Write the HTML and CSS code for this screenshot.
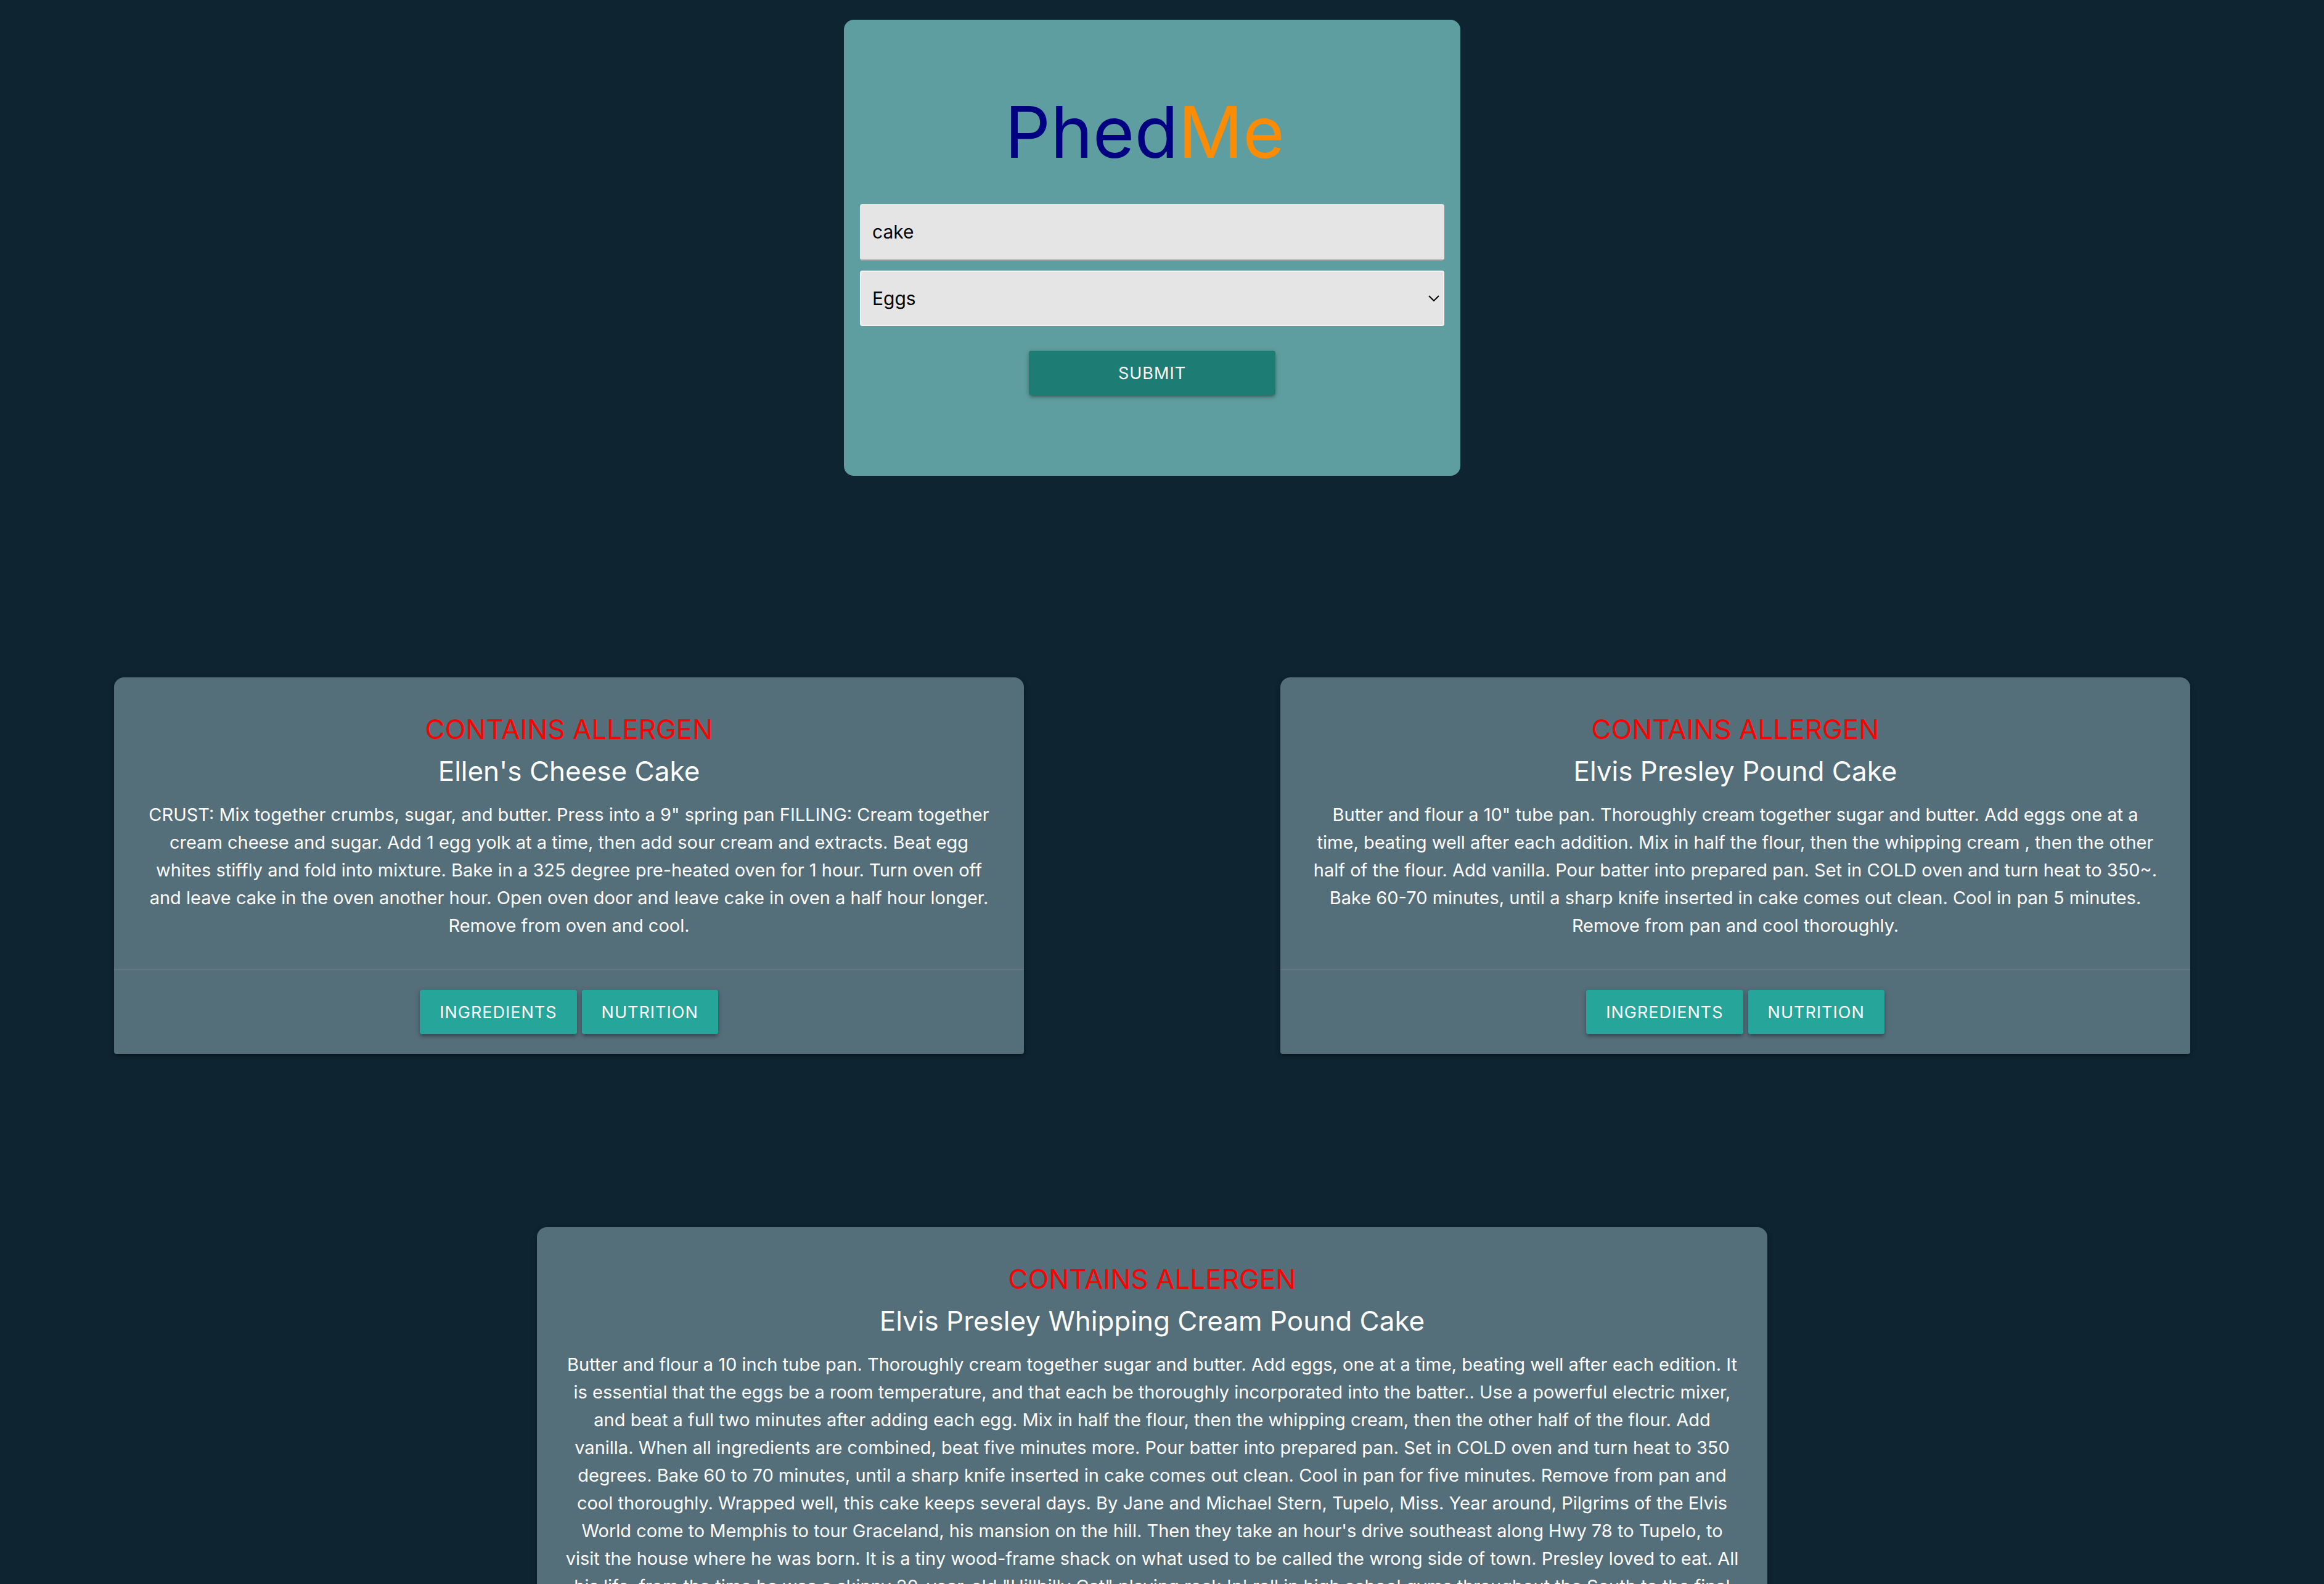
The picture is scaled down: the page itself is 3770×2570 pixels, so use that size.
FILE: index.html
```html
<!DOCTYPE html>
<html lang="en">
<head>
  <meta charset="utf-8">
  <title>PhedMe</title>
  <link rel="stylesheet" href="styles.css">
</head>
<body>
  <main class="page">
    <form class="search">
      <h1 class="logo"><span class="logo-phed">Phed</span><span class="logo-me">Me</span></h1>
      <input class="field" type="text" value="cake" aria-label="Recipe">
      <div class="select">
        <select class="field field-select" aria-label="Allergen">
          <option selected>Eggs</option>
        </select>
        <svg class="chevron" viewBox="0 0 18 10" width="18" height="10" aria-hidden="true"><path d="M1 1l8 8 8-8" fill="none" stroke="#000" stroke-width="2"/></svg>
      </div>
      <button class="btn btn-submit" type="button">Submit</button>
    </form>

    <section class="row">
      <article class="card">
        <div class="card-content">
          <h2 class="card-title allergen">CONTAINS ALLERGEN</h2>
          <h2 class="card-title">Ellen's Cheese Cake</h2>
          <p class="card-text">CRUST: Mix together crumbs, sugar, and butter. Press into a 9" spring pan FILLING: Cream together cream cheese and sugar. Add 1 egg yolk at a time, then add sour cream and extracts. Beat egg whites stiffly and fold into mixture. Bake in a 325 degree pre-heated oven for 1 hour. Turn oven off and leave cake in the oven another hour. Open oven door and leave cake in oven a half hour longer. Remove from oven and cool.</p>
        </div>
        <div class="card-action">
          <button class="btn" type="button">Ingredients</button>
          <button class="btn" type="button">Nutrition</button>
        </div>
      </article>
      <article class="card">
        <div class="card-content">
          <h2 class="card-title allergen">CONTAINS ALLERGEN</h2>
          <h2 class="card-title">Elvis Presley Pound Cake</h2>
          <p class="card-text">Butter and flour a 10" tube pan. Thoroughly cream together sugar and butter. Add eggs one at a time, beating well after each addition. Mix in half the flour, then the whipping cream , then the other half of the flour. Add vanilla. Pour batter into prepared pan. Set in COLD oven and turn heat to 350~. Bake 60-70 minutes, until a sharp knife inserted in cake comes out clean. Cool in pan 5 minutes. Remove from pan and cool thoroughly.</p>
        </div>
        <div class="card-action">
          <button class="btn" type="button">Ingredients</button>
          <button class="btn" type="button">Nutrition</button>
        </div>
      </article>
    </section>

    <section class="row row-single">
      <article class="card card-wide">
        <div class="card-content">
          <h2 class="card-title allergen">CONTAINS ALLERGEN</h2>
          <h2 class="card-title">Elvis Presley Whipping Cream Pound Cake</h2>
          <p class="card-text">Butter and flour a 10 inch tube pan. Thoroughly cream together sugar and butter. Add eggs, one at a time, beating well after each edition. It is essential that the eggs be a room temperature, and that each be thoroughly incorporated into the batter.. Use a powerful electric mixer, and beat a full two minutes after adding each egg. Mix in half the flour, then the whipping cream, then the other half of the flour. Add vanilla. When all ingredients are combined, beat five minutes more. Pour batter into prepared pan. Set in COLD oven and turn heat to 350 degrees. Bake 60 to 70 minutes, until a sharp knife inserted in cake comes out clean. Cool in pan for five minutes. Remove from pan and cool thoroughly. Wrapped well, this cake keeps several days. By Jane and Michael Stern, Tupelo, Miss. Year around, Pilgrims of the Elvis World come to Memphis to tour Graceland, his mansion on the hill. Then they take an hour's drive southeast along Hwy 78 to Tupelo, to visit the house where he was born. It is a tiny wood-frame shack on what used to be called the wrong side of town. Presley loved to eat. All his life, from the time he was a skinny 20-year-old "Hillbilly Cat" playing rock 'n' roll in high school gyms throughout the South to the final</p>
        </div>
      </article>
    </section>
  </main>
</body>
</html>
```

FILE: styles.css
```css
* {
  box-sizing: border-box;
}

body {
  margin: 0;
  background: #0e2431;
  color: #fff;
  font-family: Inter, "Liberation Sans", sans-serif;
  font-size: 29px;
  line-height: 45px;
}

.page {
  height: 100vh;
  overflow-y: auto;
  scrollbar-width: none;
  padding: 32px 32px 0 0;
}

/* Search form */
.search {
  display: flex;
  flex-direction: column;
  align-items: stretch;
  max-width: 1000px;
  margin: 0 auto;
  padding: 112px 26px 131px;
  border-radius: 16px;
  background: #5f9ea0;
}

.logo {
  margin: 0 0 47px;
  padding-right: 24px;
  font-size: 116px;
  font-weight: 400;
  line-height: 140px;
  text-align: center;
}

.logo-phed {
  color: #000080;
}

.logo-me {
  color: #ff8c00;
}

.field {
  width: 100%;
  height: 92px;
  margin: 0;
  padding: 0 20px;
  border: 0;
  border-bottom: 2px solid #9e9e9e;
  border-radius: 4px;
  background: #e5e5e5;
  color: #000;
  font-family: inherit;
  font-size: 30px;
}

.select {
  display: grid;
  align-items: center;
  margin: 16px 0 40px;
}

.field-select {
  grid-area: 1 / 1;
  height: 90px;
  padding: 0 18px;
  border: 2px solid #f2f2f2;
  appearance: none;
}

.chevron {
  grid-area: 1 / 1;
  justify-self: end;
  margin-right: 8px;
  pointer-events: none;
}

.btn {
  height: 72px;
  padding: 0 32px;
  border: 0;
  border-radius: 4px;
  background: #26a69a;
  box-shadow: 0 4px 4px 0 rgba(0, 0, 0, .14), 0 6px 2px -4px rgba(0, 0, 0, .12), 0 2px 10px 0 rgba(0, 0, 0, .2);
  color: #fff;
  font-family: inherit;
  font-size: 27px;
  letter-spacing: 1px;
  text-transform: uppercase;
}

.btn-submit {
  align-self: center;
  width: 400px;
  background: #1d7d74;
}

/* Recipe cards */
.row {
  display: flex;
  justify-content: space-between;
  margin-top: 327px;
  padding: 0 185px;
}

.row-single {
  justify-content: center;
  margin-top: 281px;
}

.card {
  flex: 0 1 1476px;
  border-radius: 16px 16px 4px 4px;
  background: #546e7a;
  box-shadow: 0 4px 4px 0 rgba(0, 0, 0, .14), 0 6px 2px -4px rgba(0, 0, 0, .12), 0 2px 10px 0 rgba(0, 0, 0, .2);
  text-align: center;
}

.card-wide {
  flex-basis: 1996px;
}

.card-content {
  padding: 50px 50px 48px;
}

.card-wide .card-content {
  padding-right: 46px;
  padding-left: 46px;
}

.card-title {
  margin: 0;
  font-size: 44px;
  font-weight: 400;
  line-height: 68px;
}

.allergen {
  color: #f00;
}

.card-text {
  margin: 14px 0 0;
}

.card-action {
  display: flex;
  justify-content: center;
  gap: 8px;
  padding: 32px 50px;
  border-top: 2px solid rgba(160, 160, 160, .2);
}
```
